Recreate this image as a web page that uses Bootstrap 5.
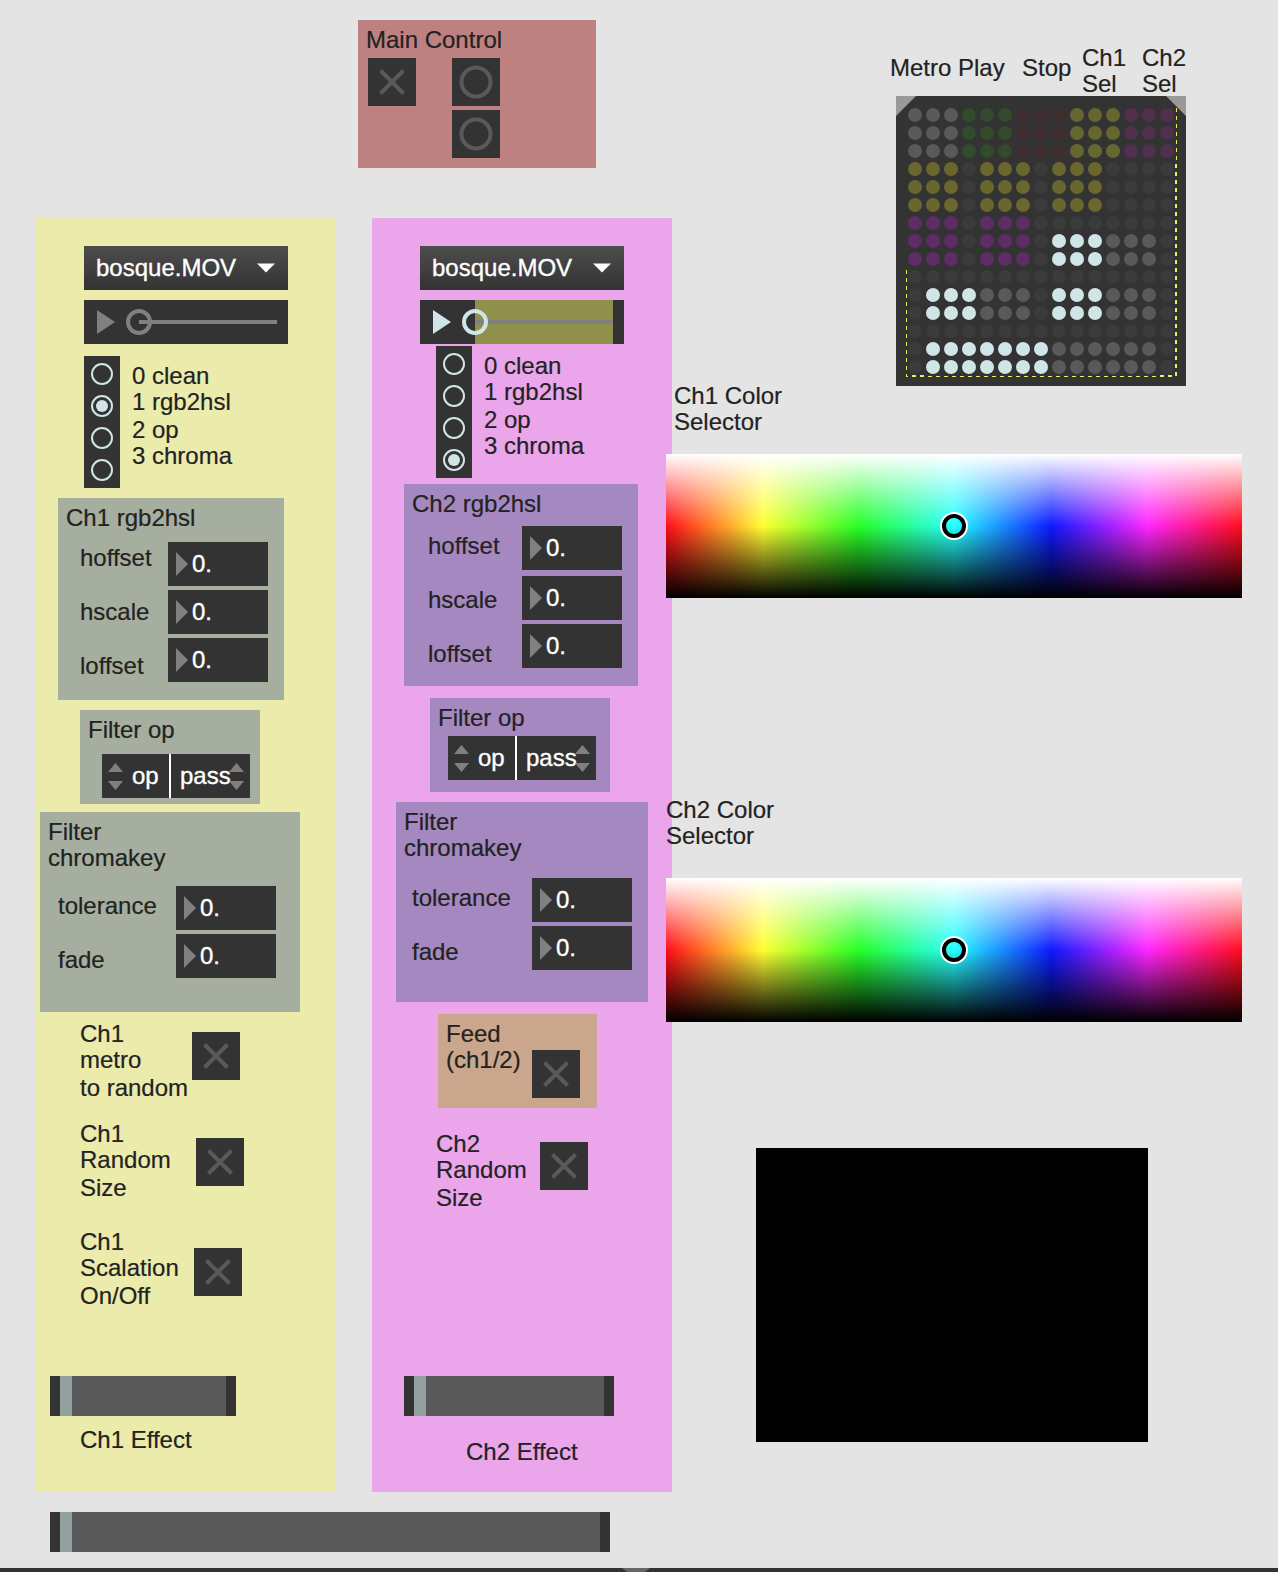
<!DOCTYPE html>
<html lang="en">
<head>
<meta charset="utf-8">
<title>Video mixer patch</title>
<link href="https://cdn.jsdelivr.net/npm/bootstrap@5.3.0/dist/css/bootstrap.min.css" rel="stylesheet">
<style>
  body { background:#e4e4e4; color:#222; font-family:"Liberation Sans",Arial,sans-serif; font-size:24px; line-height:27px; width:1278px; height:1572px; overflow:hidden; -webkit-text-stroke:.2px #222; }
  svg { display:block; flex:none; }
  .patcher { height:1568px; }
  .side-a { width:672px; flex:none; }
  .side-b { width:576px; flex:none; margin-left:-6px; }
  .statusline { height:4px; background:#333; }
  .statusline svg { margin-left:622px; }

  /* text blocks: 26 / 28 / 26 px line pitch */
  .txt { white-space:nowrap; flex:none; }
  .txt span { display:block; height:26px; }
  .txt span:nth-child(2) { height:28px; }
  .names { display:flex; flex-direction:column; gap:27px; white-space:nowrap; flex:none; }
  .names span { height:27px; }

  /* controls */
  .cell { background:#333; width:48px; height:48px; flex:none; display:block; fill:none; stroke:#595959; stroke-width:4; }
  .menu-btn { width:204px; height:44px; padding:0 0 0 12px; border:0; border-radius:0; background:linear-gradient(#4d4d4d,#333); color:#fff; font-size:24px; line-height:42px; -webkit-text-stroke:.35px #fff; }
  .menu-btn svg { margin-right:13px; }
  .player { width:204px; height:44px; margin-top:10px; background:#333; }
  .options { width:36px; height:132px; background:#333; flex:none; }
  .num { width:100px; height:44px; background:#333; color:#fff; padding-left:8px; gap:4px; line-height:44px; -webkit-text-stroke:.35px #fff; }
  .num svg { margin-top:10px; }
  .nums { display:flex; flex-direction:column; gap:4px; flex:none; }
  .stepper { width:148px; height:44px; color:#fff; line-height:44px; -webkit-text-stroke:.35px #fff; }
  .stepper .sa { width:67px; background:#333; padding-left:6px; gap:9px; }
  .stepper .sb { width:79px; background:#333; padding-left:9px; }
  .stepper .sb svg { margin-left:-2px; }
  .stepper .bar { width:2px; background:#fff; }
  .stepper svg { margin-top:9px; }
  .slide { height:40px; background:#595959; border:solid #333; border-width:0 10px; flex:none; }
  .slide i { display:block; width:12px; height:40px; background:#94a1a1; }

  /* main control */
  .main-ctl { width:238px; height:148px; margin:20px 0 0 358px; padding:6px 0 0 8px; background:#bd8181; }
  .main-ctl .pads { margin:5px 0 0 2px; gap:36px; }
  .main-ctl .stack { display:flex; flex-direction:column; gap:4px; }

  /* channels */
  .channels { margin:50px 0 0 36px; gap:36px; height:1274px; }
  .chan { width:300px; padding-top:28px; flex:none; }
  .chan > * { flex:none; }
  .c1 { background:#ebebac; } .c2 { background:#eaa5eb; }
  .c1 .pane { background:#a6ae9f; } .c2 .pane { background:#a588c0; }
  .c1 .head, .c2 .head { margin-left:48px; }
  .c1 .modes { margin:12px 0 0 48px; gap:12px; } .c1 .modes .txt { padding-top:6px; }
  .c2 .modes { margin:2px 0 0 64px; gap:12px; } .c2 .modes .txt { padding-top:6px; }

  .c1 .hsl { width:226px; height:202px; margin:10px 0 0 22px; padding:6px 0 0 8px; }
  .c1 .hsl .names { margin:13px 0 0 14px; width:88px; } .c1 .hsl .nums { margin-top:11px; }
  .c2 .hsl { width:234px; height:202px; margin:6px 0 0 32px; padding:6px 0 0 8px; }
  .c2 .hsl .names { margin:15px 0 0 16px; width:94px; } .c2 .hsl .nums { margin-top:9px; }
  .c2 .hsl .num:first-child { margin-bottom:2px; }

  .fop { width:180px; height:94px; padding:6px 0 0 8px; }
  .c1 .fop { margin:10px 0 0 44px; } .c1 .fop .stepper { margin:11px 0 0 14px; }
  .c2 .fop { margin:12px 0 0 58px; } .c2 .fop .stepper { margin:5px 0 0 10px; }

  .key { height:200px; padding:6px 0 0 8px; }
  .c1 .key { width:260px; margin:8px 0 0 4px; }
  .c1 .key .names { margin:20px 0 0 10px; width:118px; } .c1 .key .nums { margin-top:14px; }
  .c2 .key { width:252px; margin:10px 0 0 24px; }
  .c2 .key .names { margin:22px 0 0 8px; width:120px; } .c2 .key .nums { margin-top:16px; }

  .tog1 { margin:8px 0 0 44px; height:80px; } .tog1 .txt { width:112px; } .tog1 .cell { margin-top:12px; }
  .tog2 { margin:20px 0 0 44px; height:80px; } .tog2 .txt { width:116px; } .tog2 .cell { margin-top:18px; }
  .tog3 { margin:28px 0 0 44px; height:80px; } .tog3 .txt { width:114px; } .tog3 .cell { margin-top:20px; }
  .c1 .slide { width:186px; margin:68px 0 0 14px; }
  .c1 .fx { margin:10px 0 0 44px; }

  .feed { width:158.500px; height:94px; margin:12px 0 0 66px; padding:6px 0 0 8px; background:#c9a68c; }
  .feed .txt { width:86px; } .feed .cell { margin-top:30px; }
  .rnd { margin:22px 0 0 64px; height:80px; } .rnd .txt { width:104px; } .rnd .cell { margin-top:12px; }
  .c2 .slide { width:210px; margin:166px 0 0 32px; }
  .c2 .fx { margin:22px 0 0 94px; }
  .master { width:560px; margin:20px 0 0 50px; }

  /* right side */
  .keys-head { margin:44px 0 0 224px; height:52px; }
  .keys-head .w1 { width:132px; padding-top:10px; } .keys-head .w2 { width:60px; padding-top:10px; } .keys-head .w3 { width:60px; }
  .matrix { width:290px; height:290px; margin-left:230px; background:#333; padding:12px 0 0 12px; }
  .matrix svg { position:absolute; left:0; top:0; }
  .dots { display:grid; grid-template-columns:repeat(15,14px); grid-auto-rows:14px; gap:4px; }
  .dots b { border-radius:50%; }
  .d-d{background:#3b3b3b}.d-g{background:#595959}.d-G{background:#334b2d}.d-r{background:#3f2d2f}.d-y{background:#666631}
  .d-v{background:#502f4f}.d-Y{background:#6a672e}.d-V{background:#5e2d66}.d-w{background:#cfe5e8}
  .lab1 { margin:-4px 0 0 8px; } .lab2 { margin-top:198px; }
  .lab1, .lab2 { height:52px; }
  .swatch { width:576px; height:144px; display:flex; align-items:center; justify-content:center;
    background:linear-gradient(#fff,rgba(255,255,255,0) 50%,rgba(0,0,0,0) 50%,#000),linear-gradient(90deg,#ff0d1a,#ffff33 16.9%,#26ff26 33.5%,#26ffff 50%,#0d1aff 66.9%,#ff26ff 83.5%,#ff0d1a); }
  .sw1 { margin-top:20px; } .sw2 { margin-top:30px; }
  .video { width:392px; height:294px; margin:126px 0 0 90px; background:#000; }
</style>
</head>
<body>
<svg width="0" height="0" class="position-absolute">
  <symbol id="x" viewBox="0 0 48 48"><path d="M12.5 12.5l23 23M35.5 12.5l-23 23"/></symbol>
  <symbol id="o" viewBox="0 0 48 48"><circle cx="24" cy="24" r="14.5"/></symbol>
  <symbol id="tri" viewBox="0 0 12 24"><path d="M0 0l12 12L0 24z" fill="#808080"/></symbol>
  <symbol id="ud" viewBox="0 0 15 27"><path d="M0 9l7.5-9L15 9zM0 18h15l-7.500 9z" fill="#808080"/></symbol>
  <symbol id="dn" viewBox="0 0 18 10"><path d="M0 .5h18L9 9.500z" fill="#fff"/></symbol>
</svg>

<main class="patcher d-flex">
  <div class="side-a d-flex flex-column">
    <section class="main-ctl">
      <div>Main Control</div>
      <div class="pads d-flex">
        <svg class="cell"><use href="#x"/></svg>
        <div class="stack"><svg class="cell"><use href="#o"/></svg><svg class="cell"><use href="#o"/></svg></div>
      </div>
    </section>

    <div class="channels d-flex">
      <section class="chan c1 d-flex flex-column align-items-start">
        <div class="head">
          <button class="menu-btn btn d-flex justify-content-between align-items-center">bosque.MOV<svg width="18" height="10"><use href="#dn"/></svg></button>
          <svg class="player" viewBox="0 0 204 44"><path d="M13 10l18 12-18 12z" fill="#808080"/><path d="M55 22h138" stroke="#808080" stroke-width="4"/><circle cx="55" cy="22" r="11" fill="none" stroke="#808080" stroke-width="4"/></svg>
        </div>
        <div class="modes d-flex">
          <svg class="options" fill="none" stroke="#cfe5e8" stroke-width="2"><circle cx="18" cy="18" r="10"/><circle cx="18" cy="50" r="10"/><circle cx="18" cy="82" r="10"/><circle cx="18" cy="114" r="10"/><circle cx="18" cy="50" r="6" fill="#cfe5e8" stroke="none"/></svg>
          <div class="txt"><span>0 clean</span><span>1 rgb2hsl</span><span>2 op</span><span>3 chroma</span></div>
        </div>
        <div class="pane hsl">
          <div>Ch1 rgb2hsl</div>
          <div class="d-flex">
            <div class="names"><span>hoffset</span><span>hscale</span><span>loffset</span></div>
            <div class="nums">
              <div class="num d-flex"><svg width="12" height="24"><use href="#tri"/></svg>0.</div>
              <div class="num d-flex"><svg width="12" height="24"><use href="#tri"/></svg>0.</div>
              <div class="num d-flex"><svg width="12" height="24"><use href="#tri"/></svg>0.</div>
            </div>
          </div>
        </div>
        <div class="pane fop">
          <div>Filter op</div>
          <div class="stepper d-flex">
            <div class="sa d-flex"><svg width="15" height="27"><use href="#ud"/></svg><span>op</span></div>
            <div class="bar"></div>
            <div class="sb d-flex"><span>pass</span><svg width="15" height="27"><use href="#ud"/></svg></div>
          </div>
        </div>
        <div class="pane key">
          <div class="txt"><span>Filter</span><span>chromakey</span></div>
          <div class="d-flex">
            <div class="names"><span>tolerance</span><span>fade</span></div>
            <div class="nums">
              <div class="num d-flex"><svg width="12" height="24"><use href="#tri"/></svg>0.</div>
              <div class="num d-flex"><svg width="12" height="24"><use href="#tri"/></svg>0.</div>
            </div>
          </div>
        </div>
        <div class="tog1 d-flex"><div class="txt"><span>Ch1</span><span>metro</span><span>to random</span></div><svg class="cell"><use href="#x"/></svg></div>
        <div class="tog2 d-flex"><div class="txt"><span>Ch1</span><span>Random</span><span>Size</span></div><svg class="cell"><use href="#x"/></svg></div>
        <div class="tog3 d-flex"><div class="txt"><span>Ch1</span><span>Scalation</span><span>On/Off</span></div><svg class="cell"><use href="#x"/></svg></div>
        <div class="slide"><i></i></div>
        <div class="fx">Ch1 Effect</div>
      </section>

      <section class="chan c2 d-flex flex-column align-items-start">
        <div class="head">
          <button class="menu-btn btn d-flex justify-content-between align-items-center">bosque.MOV<svg width="18" height="10"><use href="#dn"/></svg></button>
          <svg class="player" viewBox="0 0 204 44"><path d="M55 0h138v44H55z" fill="#90904d"/><path d="M13 10l18 12-18 12z" fill="#cfe5e8"/><path d="M55 22h138" stroke="#808080" stroke-width="4"/><circle cx="55" cy="22" r="11" fill="none" stroke="#cfe5e8" stroke-width="4"/></svg>
        </div>
        <div class="modes d-flex">
          <svg class="options" fill="none" stroke="#cfe5e8" stroke-width="2"><circle cx="18" cy="18" r="10"/><circle cx="18" cy="50" r="10"/><circle cx="18" cy="82" r="10"/><circle cx="18" cy="114" r="10"/><circle cx="18" cy="114" r="6" fill="#cfe5e8" stroke="none"/></svg>
          <div class="txt"><span>0 clean</span><span>1 rgb2hsl</span><span>2 op</span><span>3 chroma</span></div>
        </div>
        <div class="pane hsl">
          <div>Ch2 rgb2hsl</div>
          <div class="d-flex">
            <div class="names"><span>hoffset</span><span>hscale</span><span>loffset</span></div>
            <div class="nums">
              <div class="num d-flex"><svg width="12" height="24"><use href="#tri"/></svg>0.</div>
              <div class="num d-flex"><svg width="12" height="24"><use href="#tri"/></svg>0.</div>
              <div class="num d-flex"><svg width="12" height="24"><use href="#tri"/></svg>0.</div>
            </div>
          </div>
        </div>
        <div class="pane fop">
          <div>Filter op</div>
          <div class="stepper d-flex">
            <div class="sa d-flex"><svg width="15" height="27"><use href="#ud"/></svg><span>op</span></div>
            <div class="bar"></div>
            <div class="sb d-flex"><span>pass</span><svg width="15" height="27"><use href="#ud"/></svg></div>
          </div>
        </div>
        <div class="pane key">
          <div class="txt"><span>Filter</span><span>chromakey</span></div>
          <div class="d-flex">
            <div class="names"><span>tolerance</span><span>fade</span></div>
            <div class="nums">
              <div class="num d-flex"><svg width="12" height="24"><use href="#tri"/></svg>0.</div>
              <div class="num d-flex"><svg width="12" height="24"><use href="#tri"/></svg>0.</div>
            </div>
          </div>
        </div>
        <div class="feed d-flex"><div class="txt"><span>Feed</span><span>(ch1/2)</span></div><svg class="cell"><use href="#x"/></svg></div>
        <div class="rnd d-flex"><div class="txt"><span>Ch2</span><span>Random</span><span>Size</span></div><svg class="cell"><use href="#x"/></svg></div>
        <div class="slide"><i></i></div>
        <div class="fx">Ch2 Effect</div>
      </section>
    </div>
    <div class="slide master"><i></i></div>
  </div>

  <div class="side-b">
    <div class="keys-head d-flex">
      <div class="txt w1">Metro Play</div><div class="txt w2">Stop</div>
      <div class="txt w3"><span>Ch1</span><span>Sel</span></div><div class="txt w3"><span>Ch2</span><span>Sel</span></div>
    </div>
    <div class="matrix position-relative">
      <div class="dots" id="dots"></div>
      <svg width="290" height="290" fill="none" stroke="#ebeb5c" shape-rendering="crispEdges">
        <path d="M0 0h20L0 20zM290 0h-20l20 20z" fill="#999" stroke="none" shape-rendering="auto"/>
        <path d="M10.500 174v106" stroke-dasharray="4 4"/>
        <path d="M280.500 12v56" stroke-dasharray="4 4"/>
        <path d="M280 68v212" stroke-width="2" stroke-dasharray="4 4"/>
        <path d="M10 280.500h2M32 280.500h232" stroke-dasharray="4 4"/>
        <path d="M16 280h16M264 280h16" stroke-width="2" stroke-dasharray="4 4"/>
      </svg>
    </div>
    <div class="txt lab1"><span>Ch1 Color</span><span>Selector</span></div>
    <div class="swatch sw1"><svg width="28" height="28"><circle cx="14" cy="14" r="12.500" fill="none" stroke="#fff" stroke-width="3"/><circle cx="14" cy="14" r="10" fill="none" stroke="#000" stroke-width="4"/></svg></div>
    <div class="txt lab2"><span>Ch2 Color</span><span>Selector</span></div>
    <div class="swatch sw2"><svg width="28" height="28"><circle cx="14" cy="14" r="12.500" fill="none" stroke="#fff" stroke-width="3"/><circle cx="14" cy="14" r="10" fill="none" stroke="#000" stroke-width="4"/></svg></div>
    <div class="video"></div>
  </div>
</main>
<footer class="statusline"><svg width="28" height="4"><path d="M0 0h28l-5 4H5z" fill="#666"/></svg></footer>

<script src="https://cdn.jsdelivr.net/npm/bootstrap@5.3.0/dist/js/bootstrap.bundle.min.js"></script>
<script>
  // one character per LED: d idle, g grey, w lit, others tinted zones
  const a = 'gggGGGrrryyyvvv', b = 'YYYdYYYdYYYdddd', c = 'VVVdVVVdwwwgggd', e = 'ddddddddddddddd', f = 'dwwwgggdwwwgggd', h = 'dwwwwwwwggggggd';
  document.getElementById('dots').innerHTML =
    [a, a, a, b, b, b, 'VVVdVVVdddddddd', c, c, e, f, f, e, h, h].join('').split('').map(k => `<b class="d-${k}"></b>`).join('');
</script>
</body>
</html>
